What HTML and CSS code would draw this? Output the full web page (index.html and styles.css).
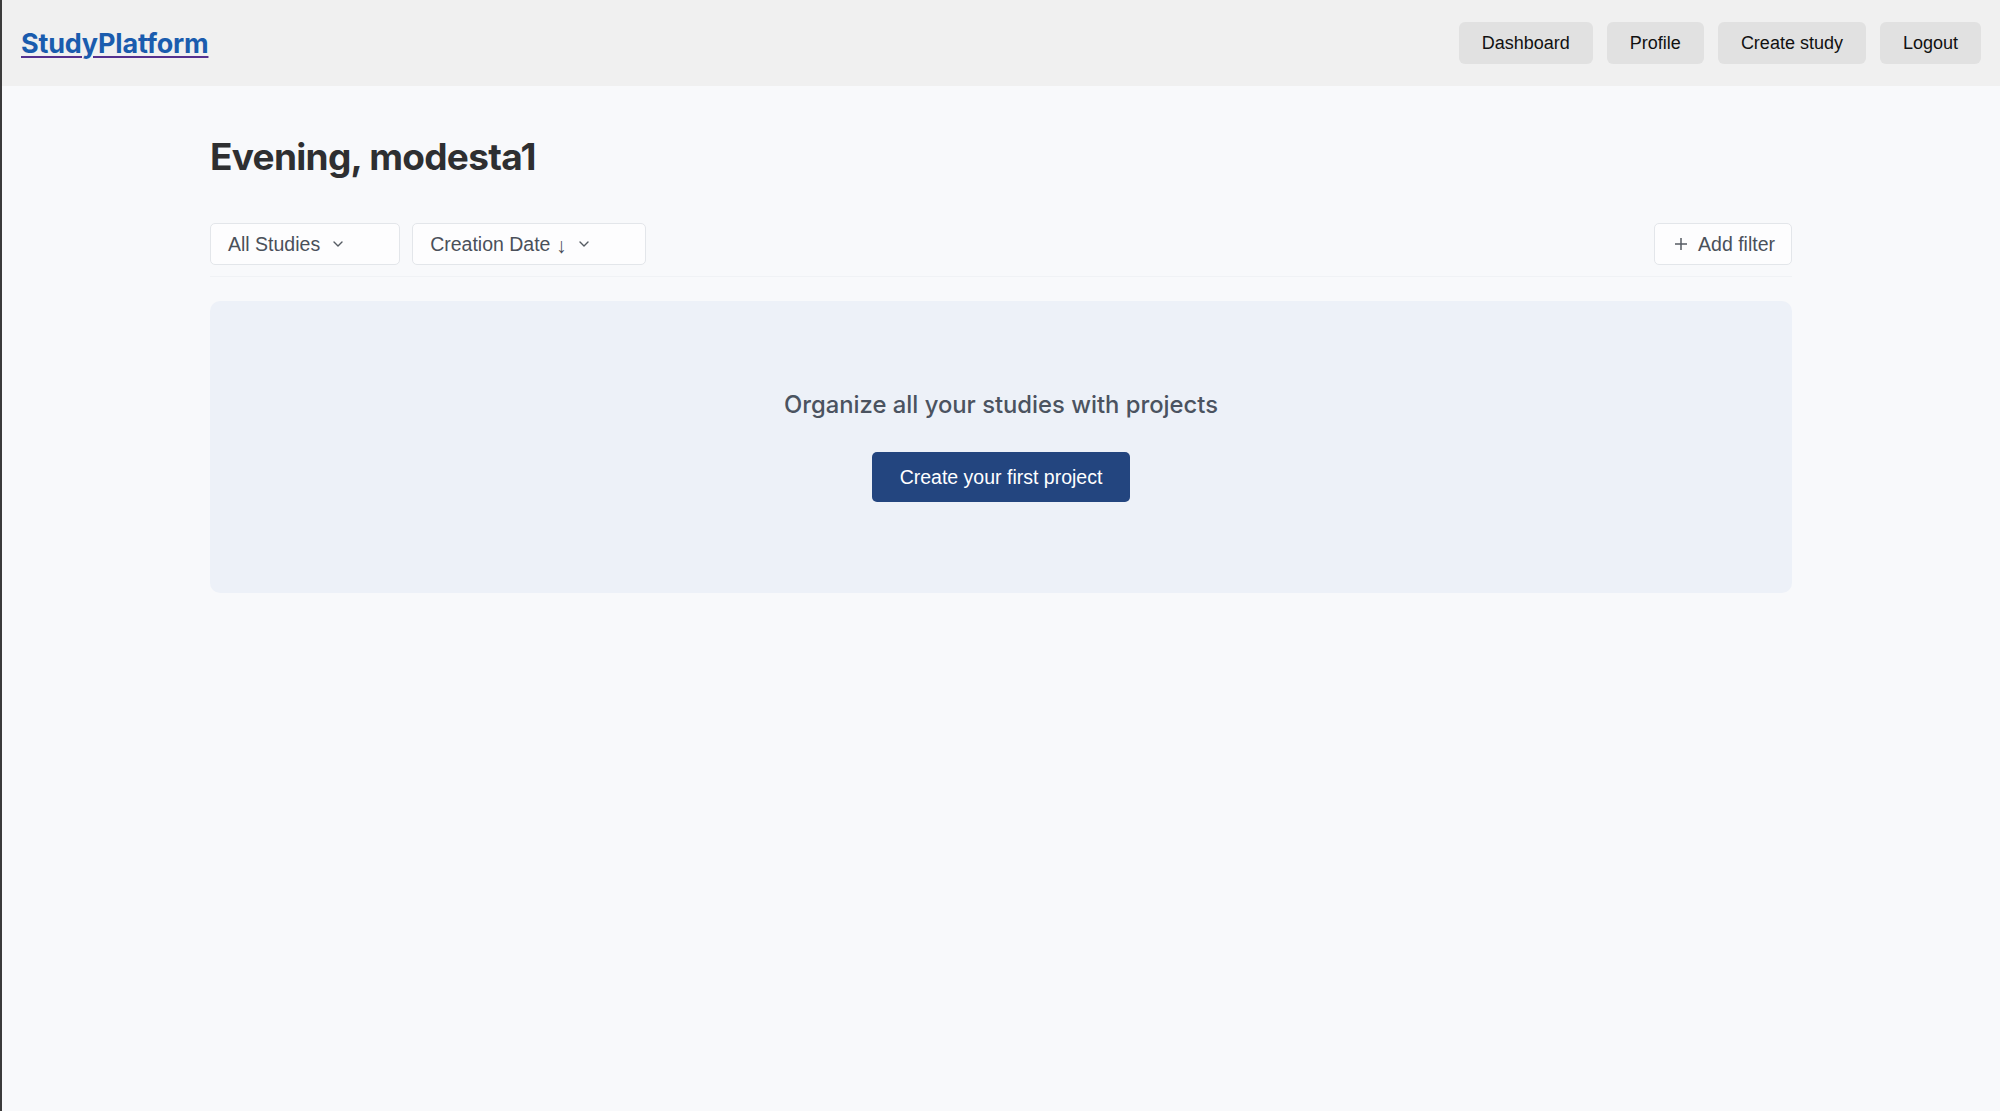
FILE: index.html
```html
<!DOCTYPE html>
<html lang="en">
<head>
  <meta charset="UTF-8">
  <meta name="viewport" content="width=device-width, initial-scale=1.0">
  <title>StudyPlatform - Dashboard</title>
  <link rel="stylesheet" href="styles.css">
</head>
<body>
  <!-- Top navigation -->
  <header class="topbar">
    <a href="#" class="brand">StudyPlatform</a>
    <nav class="nav">
      <button class="nav-button">Dashboard</button>
      <button class="nav-button">Profile</button>
      <button class="nav-button">Create study</button>
      <button class="nav-button">Logout</button>
    </nav>
  </header>

  <main class="page">
    <h1 class="greeting">Evening, modesta1</h1>

    <!-- Filters -->
    <div class="filter-bar">
      <div class="filter-group">
        <button class="select-button">
          <span>All Studies</span>
          <svg class="chevron" viewBox="0 0 10 6" width="10" height="6"><path d="M1 1l4 4 4-4" /></svg>
        </button>
        <button class="select-button">
          <span>Creation Date <span class="arrow">&#8595;</span></span>
          <svg class="chevron" viewBox="0 0 10 6" width="10" height="6"><path d="M1 1l4 4 4-4" /></svg>
        </button>
      </div>
      <button class="add-filter">
        <svg class="plus" viewBox="0 0 14 14" width="14" height="14"><path d="M7 1v12M1 7h12" /></svg>
        <span>Add filter</span>
      </button>
    </div>

    <!-- Empty state -->
    <section class="empty-card">
      <p class="empty-text">Organize all your studies with projects</p>
      <button class="primary-button">Create your first project</button>
    </section>
  </main>
</body>
</html>
```

FILE: styles.css
```css
/* General page */
body {
  margin: 0;
  padding: 0;
  min-height: 100vh;
  background: #f8f9fb;
  border-left: 2px solid #3b3b3b;
  font-family: "Liberation Sans", Arial, sans-serif;
}

button {
  font-family: "Liberation Sans", Arial, sans-serif;
  cursor: pointer;
}

/* Header */
.topbar {
  display: flex;
  justify-content: space-between;
  align-items: center;
  height: 86px;
  padding: 0 19px 0 19px;
  background: #f0f0f0;
}

.brand {
  font-family: Inter, "Noto Sans", sans-serif;
  font-size: 27px;
  font-weight: 700;
  color: #1a5cae;
  text-decoration: underline;
  text-decoration-color: #55308f;
  text-decoration-thickness: 2px;
  text-underline-offset: 3px;
  letter-spacing: -0.2px;
}

.nav {
  display: flex;
  gap: 14px;
}

.nav-button {
  height: 42px;
  padding: 0 23px;
  border: none;
  border-radius: 6px;
  background: #e1e1e1;
  color: #111;
  font-size: 18px;
}

/* Main content */
.page {
  max-width: 1582px;
  margin: 0 auto;
  padding-top: 48px;
}

.greeting {
  margin: 0 0 44px;
  font-family: Inter, "Noto Sans", sans-serif;
  font-size: 37px;
  font-weight: 700;
  color: #2e2f31;
  letter-spacing: -0.7px;
}

.filter-bar {
  display: flex;
  justify-content: space-between;
  align-items: center;
  padding-bottom: 11px;
  margin-bottom: 25px;
  box-shadow: 0 1px 0 #f0f2f5;
}

.filter-group {
  display: flex;
  gap: 12px;
}

.select-button {
  display: flex;
  align-items: center;
  gap: 13px;
  height: 42px;
  padding: 0 56px 0 17px;
  border: 1px solid #e3e6ea;
  border-radius: 5px;
  background: #fdfdfe;
  color: #4a505a;
  font-size: 19.5px;
}

.arrow {
  font-size: 21px;
  position: relative;
  top: 2px;
}

.chevron {
  fill: none;
  stroke: #555b63;
  stroke-width: 1.4;
  stroke-linecap: round;
  stroke-linejoin: round;
}

.add-filter {
  display: flex;
  align-items: center;
  gap: 10px;
  height: 42px;
  padding: 0 16px 0 19px;
  border: 1px solid #e3e6ea;
  border-radius: 5px;
  background: #fdfdfe;
  color: #4a505a;
  font-size: 19.5px;
}

.plus {
  fill: none;
  stroke: #555b63;
  stroke-width: 1.5;
}

/* Empty state card */
.empty-card {
  display: flex;
  flex-direction: column;
  align-items: center;
  padding: 89px 0 91px;
  border-radius: 10px;
  background: #edf1f8;
}

.empty-text {
  margin: 0 0 33px;
  font-family: Inter, "Noto Sans", sans-serif;
  font-size: 23.8px;
  font-weight: 500;
  color: #4b5360;
}

.primary-button {
  height: 50px;
  padding: 0 28px;
  border: none;
  border-radius: 5px;
  background: #23457f;
  color: #fff;
  font-size: 19.5px;
}
```
